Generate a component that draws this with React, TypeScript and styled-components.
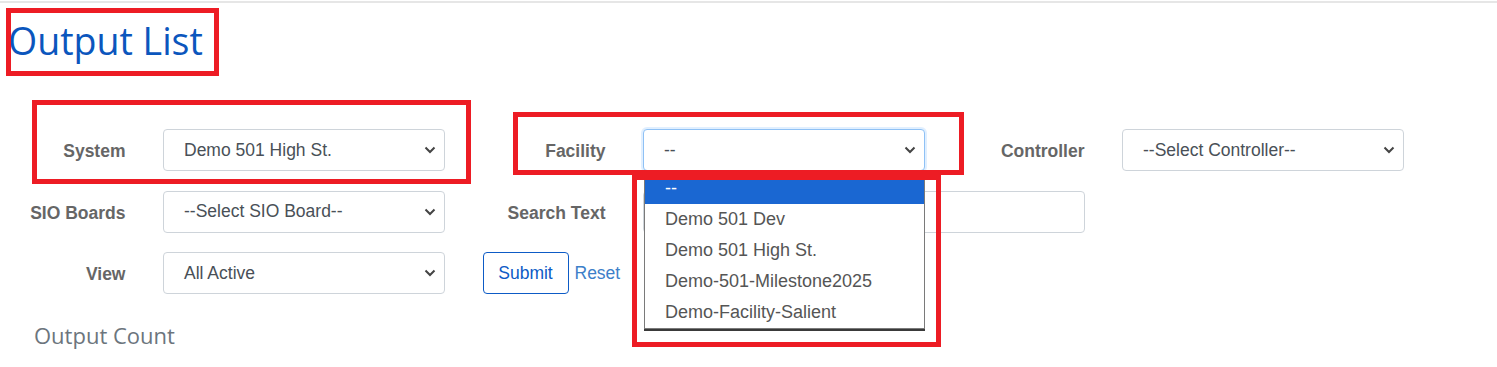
import React from "react";
import styled, { createGlobalStyle, css } from "styled-components";

const GlobalStyle = createGlobalStyle`
  html, body {
    margin: 0;
    padding: 0;
    background: #ffffff;
  }
  * {
    box-sizing: border-box;
  }
`;

const chevron =
  "url(\"data:image/svg+xml;utf8,<svg xmlns='http://www.w3.org/2000/svg' width='12' height='8' viewBox='0 0 12 8'><path d='M1.5 1.5 L6 6 L10.5 1.5' fill='none' stroke='%23444' stroke-width='2'/></svg>\")";

const Page = styled.div`
  position: relative;
  width: 1497px;
  height: 367px;
  overflow: hidden;
`;

const TopRule = styled.div`
  margin-top: 1px;
  height: 2px;
  background: #e6e6e6;
`;

const Title = styled.h1`
  margin: 15px 0 0 0;
  padding-left: 8px;
  font-family: "Open Sans", sans-serif;
  font-weight: 400;
  font-size: 37.5px;
  line-height: 1.2;
  color: #0b56bd;
`;

const FormGrid = styled.div`
  display: grid;
  grid-template-columns: 122px 282px 123px 282px 122px 282px;
  column-gap: 37.5px;
  row-gap: 19.5px;
  margin-top: 66px;
  padding-left: 3.5px;
`;

const Label = styled.label`
  align-self: center;
  padding-top: 3px;
  text-align: right;
  font-family: "Liberation Sans", Arial, sans-serif;
  font-weight: 700;
  font-size: 17.5px;
  color: #666666;
`;

const Field = styled.div<{ $span?: number }>`
  position: relative;
  grid-column: span ${(p) => p.$span ?? 1};
`;

const controlBase = css`
  display: block;
  width: 100%;
  height: 42px;
  border: 1px solid #ced4da;
  border-radius: 4px;
  background-color: #ffffff;
  font-family: "Liberation Sans", Arial, sans-serif;
  font-size: 17.5px;
  color: #495057;
  outline: none;
`;

const Select = styled.div<{ $focused?: boolean }>`
  ${controlBase};
  display: flex;
  align-items: center;
  white-space: nowrap;
  padding: 0 32px 0 20px;
  background-image: ${chevron};
  background-repeat: no-repeat;
  background-position: right 8px center;
  ${(p) =>
    p.$focused &&
    css`
      border-color: #8fc1f5;
      box-shadow: 0 0 0 2px rgba(0, 123, 255, 0.12);
    `}
`;

const TextInput = styled.input`
  ${controlBase};
  padding: 0 12px;
`;

const Actions = styled.div`
  display: flex;
  align-items: center;
  gap: 6px;
  white-space: nowrap;
`;

const SubmitButton = styled.button`
  flex-shrink: 0;
  height: 42px;
  width: 86px;
  border: 1px solid #0d5bc6;
  border-radius: 4px;
  background: #ffffff;
  color: #0d5bc6;
  font-family: "Liberation Sans", Arial, sans-serif;
  font-size: 17.5px;
  padding: 0;
`;

const ResetLink = styled.a`
  flex-shrink: 0;
  color: #3d7fc9;
  font-family: "Liberation Sans", Arial, sans-serif;
  font-size: 17.5px;
  text-decoration: none;
`;

const Dropdown = styled.ul`
  position: absolute;
  top: calc(100% + 1px);
  left: 1px;
  width: 281px;
  margin: 0;
  padding: 0;
  list-style: none;
  background: #ffffff;
  border: 1px solid #7a7a7a;
  box-shadow: 0 2px 0 #3a3a3a;
  z-index: 2;
`;

const Option = styled.li<{ $selected?: boolean }>`
  height: 31px;
  line-height: 31px;
  padding-left: 20px;
  font-family: "Liberation Sans", Arial, sans-serif;
  font-size: 18px;
  color: ${(p) => (p.$selected ? "#ffffff" : "#555555")};
  background: ${(p) => (p.$selected ? "#1a67d2" : "transparent")};
`;

const SectionHeading = styled.h2`
  margin: 28px 0 0 0;
  padding-left: 34px;
  font-family: "Open Sans", sans-serif;
  font-weight: 400;
  font-size: 22px;
  line-height: 1.2;
  color: #6c757d;
`;

const Highlight = styled.div<{ $x: number; $y: number; $w: number; $h: number }>`
  position: absolute;
  left: ${(p) => p.$x}px;
  top: ${(p) => p.$y}px;
  width: ${(p) => p.$w}px;
  height: ${(p) => p.$h}px;
  border: 5px solid #ed1c24;
  pointer-events: none;
  z-index: 3;
`;

const facilities = [
  "--",
  "Demo 501 Dev",
  "Demo 501 High St.",
  "Demo-501-Milestone2025",
  "Demo-Facility-Salient",
];

const App = () => {
  return (
    <Page>
      <GlobalStyle />
      <TopRule />
      <Title>Output List</Title>

      <FormGrid>
        <Label>System</Label>
        <Field>
          <Select>Demo 501 High St.</Select>
        </Field>
        <Label>Facility</Label>
        <Field>
          <Select $focused>--</Select>
          <Dropdown>
            {facilities.map((f, i) => (
              <Option key={f} $selected={i === 0}>
                {f}
              </Option>
            ))}
          </Dropdown>
        </Field>
        <Label>Controller</Label>
        <Field>
          <Select>--Select Controller--</Select>
        </Field>

        <Label>SIO Boards</Label>
        <Field>
          <Select>--Select SIO Board--</Select>
        </Field>
        <Label>Search Text</Label>
        <Field $span={2}>
          <TextInput />
        </Field>
        <div />

        <Label>View</Label>
        <Field>
          <Select>All Active</Select>
        </Field>
        <Actions>
          <SubmitButton>Submit</SubmitButton>
          <ResetLink href="#">Reset</ResetLink>
        </Actions>
      </FormGrid>

      <SectionHeading>Output Count</SectionHeading>

      <Highlight $x={6} $y={8} $w={213} $h={68} />
      <Highlight $x={32} $y={100} $w={439} $h={84} />
      <Highlight $x={513} $y={112} $w={451} $h={63} />
      <Highlight $x={632} $y={175} $w={309} $h={172} />
    </Page>
  );
};

export default App;
